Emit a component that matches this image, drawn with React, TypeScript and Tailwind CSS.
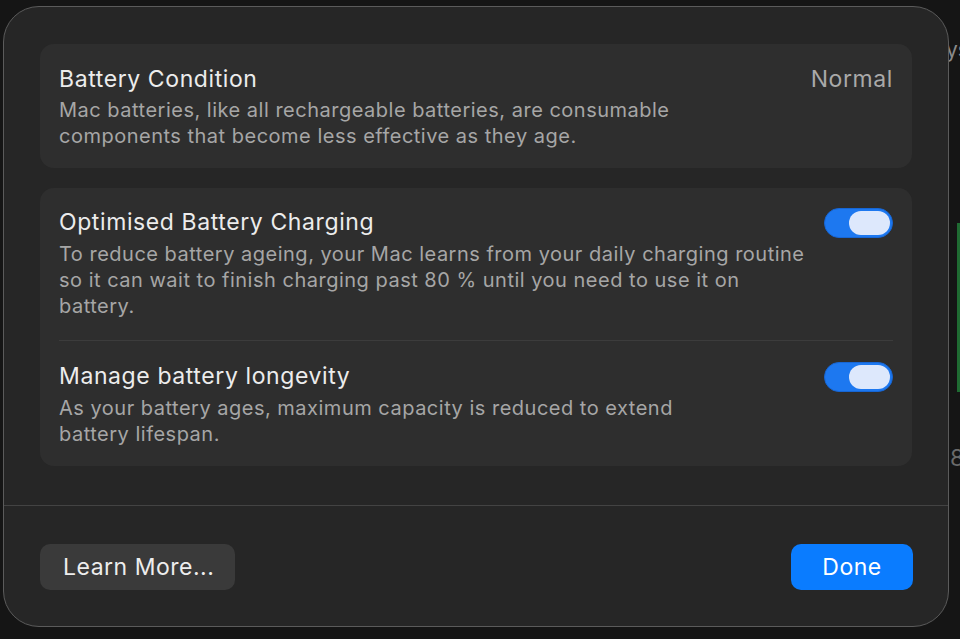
import React from 'react';

const Toggle = () => {
    return (
        <div className="w-[69px] h-[30px] rounded-full bg-[#1d78f0] border border-[#1766d4] flex items-center justify-end pr-[2px] shrink-0">
            <div className="w-[41px] h-[24px] rounded-full bg-[#dde8fc]" />
        </div>
    );
};

const App = () => {
    return (
        <div className="relative w-[960px] h-[639px] bg-[#151515] overflow-hidden" style={{ fontFamily: 'Inter, "Noto Sans", sans-serif' }}>
            {/* what lies behind the sheet */}
            <div className="absolute left-[946px] top-[34px] text-[21px] text-[#8a8a8a]">ys</div>
            <div className="absolute left-[957px] top-[223px] w-[3px] h-[169px] bg-[#1f6b32]" />
            <div className="absolute left-[950px] top-[441px] text-[23px] text-[#6a6a6a]">8</div>

            <div className="absolute left-[3px] top-[6px] w-[946px] h-[621px] rounded-[36px] border border-[#5b5b5b] bg-[#262626] flex flex-col overflow-hidden">
                <div className="px-[36px] pt-[37px] flex flex-col gap-5">
                    <div className="rounded-[14px] bg-[#2e2e2e] px-[19px] pt-[21px] pb-[19px]">
                        <div className="flex justify-between items-start">
                            <h1 className="text-[23px] leading-[28px] tracking-[0.6px] text-[#ececec]">Battery Condition</h1>
                            <span className="text-[23px] leading-[28px] tracking-[0.6px] text-[#a9a9a9]">Normal</span>
                        </div>
                        <p className="mt-1 whitespace-nowrap text-[20px] leading-[26px] tracking-[0.5px] text-[#a6a6a6]">
                            Mac batteries, like all rechargeable batteries, are consumable<br />
                            components that become less effective as they age.
                        </p>
                    </div>

                    <div className="rounded-[14px] bg-[#2e2e2e] px-[19px] pt-[20px] pb-[19px]">
                        <div className="flex justify-between items-start gap-4">
                            <div className="min-w-0">
                                <h2 className="text-[23px] leading-[28px] tracking-[0.6px] text-[#ececec]">Optimised Battery Charging</h2>
                                <p className="mt-[5px] whitespace-nowrap text-[20px] leading-[26px] tracking-[0.5px] text-[#a6a6a6]">
                                    To reduce battery ageing, your Mac learns from your daily charging routine<br />
                                    so it can wait to finish charging past 80 % until you need to use it on<br />
                                    battery.
                                </p>
                            </div>
                            <Toggle />
                        </div>
                        <div className="h-px bg-[#3c3c3c] mt-[21px] mb-[21px]" />
                        <div className="flex justify-between items-start gap-4">
                            <div className="min-w-0">
                                <h2 className="text-[23px] leading-[28px] tracking-[0.6px] text-[#ececec]">Manage battery longevity</h2>
                                <p className="mt-[5px] whitespace-nowrap text-[20px] leading-[26px] tracking-[0.5px] text-[#a6a6a6]">
                                    As your battery ages, maximum capacity is reduced to extend<br />
                                    battery lifespan.
                                </p>
                            </div>
                            <Toggle />
                        </div>
                    </div>
                </div>

                <div className="mt-[39px] border-t border-[#434343] px-[36px] pt-[38px] flex justify-between">
                    <button className="h-[46px] w-[195px] rounded-[10px] bg-[#3a3a3a] text-left pl-[23px] text-[23px] tracking-[0.5px] text-[#ededed]">
                        Learn More...
                    </button>
                    <button className="h-[46px] w-[122px] -mr-px rounded-[10px] bg-[#0a7cff] text-[23px] tracking-[0.5px] text-white">
                        Done
                    </button>
                </div>
            </div>
        </div>
    );
};

export default App;
